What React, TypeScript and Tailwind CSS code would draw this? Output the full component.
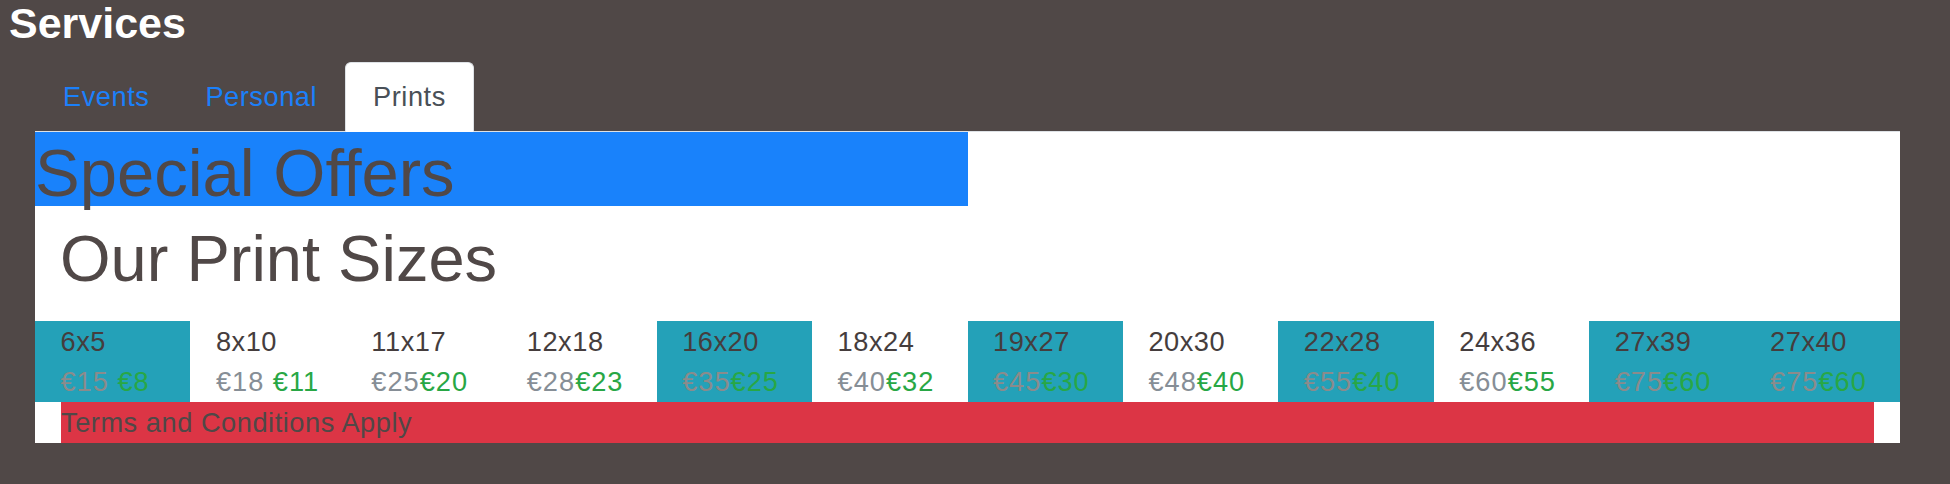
const prints = [
  { size: '6x5', was: '€15', now: '€8', info: true, gap: true },
  { size: '8x10', was: '€18', now: '€11', info: false, gap: true },
  { size: '11x17', was: '€25', now: '€20', info: false },
  { size: '12x18', was: '€28', now: '€23', info: false },
  { size: '16x20', was: '€35', now: '€25', info: true },
  { size: '18x24', was: '€40', now: '€32', info: false },
  { size: '19x27', was: '€45', now: '€30', info: true },
  { size: '20x30', was: '€48', now: '€40', info: false },
  { size: '22x28', was: '€55', now: '€40', info: true },
  { size: '24x36', was: '€60', now: '€55', info: false },
  { size: '27x39', was: '€75', now: '€60', info: true },
  { size: '27x40', was: '€75', now: '€60', info: true },
];

const tabs = ['Events', 'Personal', 'Prints'];

export default function App() {
  return (
    <div className="min-h-[484px] bg-[#504847] font-['Liberation_Sans',Arial,sans-serif] text-[#504847]">
      <h2 className="pl-[9px] text-[43px] font-bold leading-[46px] text-white">Services</h2>

      {/* tabs */}
      <ul className="mt-[16px] ml-[35px] flex w-[1865px] border-b border-[#dee2e6] text-[27.2px] tracking-[0.02em]">
        {tabs.map(tab => (
          <li key={tab} className="-mb-px">
            <a
              className={
                tab === 'Prints'
                  ? 'block rounded-t-[6px] border border-[#dee2e6] border-b-white bg-white px-[27px] py-[13px] leading-[42px] text-[#495057]'
                  : 'block border border-transparent px-[27px] py-[13px] leading-[42px] text-[#1b80fa]'
              }
            >
              {tab}
            </a>
          </li>
        ))}
      </ul>

      <div className="ml-[35px] w-[1865px] bg-white">
        <div className="w-1/2 bg-[#1982fb] pt-[8px]">
          <h1 className="text-[67px] leading-[66px]">Special Offers</h1>
        </div>

        <h1 className="pl-[25px] pt-[14px] pb-[23px] text-[65px] leading-[78px]">Our Print Sizes</h1>

        <div className="grid grid-cols-12 text-[27.2px] leading-[40px] tracking-[0.02em]">
          {prints.map(p => (
            <div key={p.size} className={`px-[25.5px] ${p.info ? 'bg-[#24a1b8]' : 'bg-white'}`}>
              <div className="pt-px text-[#453d3d]">{p.size}</div>
              <div className="tracking-[1px]">
                <span className={p.info ? 'text-[#8b8b8b]' : 'text-[#868e96]'}>{p.was}</span>
                {p.gap ? ' ' : ''}
                <span className="text-[#28a745]">{p.now}</span>
              </div>
            </div>
          ))}
        </div>

        <div className="px-[26px]">
          <p className="bg-[#dc3545] text-[27.2px] leading-[41px] tracking-[0.02em]">Terms and Conditions Apply</p>
        </div>
      </div>
    </div>
  );
}
